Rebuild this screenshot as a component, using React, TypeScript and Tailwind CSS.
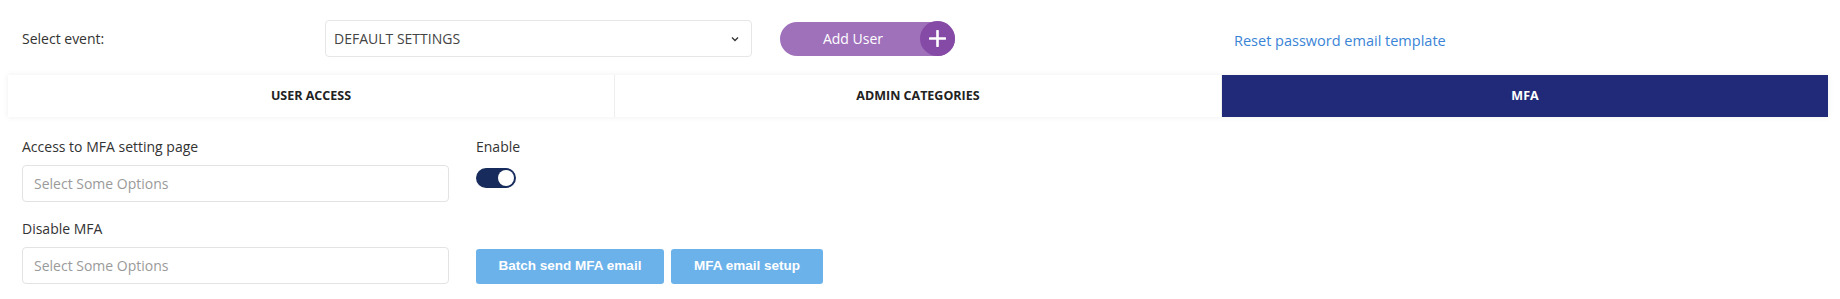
import { useState } from 'react';

const tabs = ['User access', 'Admin categories', 'MFA'];

function ChevronDown() {
  return (
    <svg width="8" height="6" viewBox="0 0 8 6" fill="none" aria-hidden="true">
      <path d="M1 1.5 4 4.5 7 1.5" stroke="#333" strokeWidth="1.3" />
    </svg>
  );
}

function PlusIcon() {
  return (
    <svg width="17" height="17" viewBox="0 0 17 17" aria-hidden="true">
      <path d="M8.5 1v15M1 8.5h15" stroke="#fff" strokeWidth="2.6" strokeLinecap="round" />
    </svg>
  );
}

function OptionsField({ label }: { label: string }) {
  return (
    <div className="flex flex-col">
      <label className="mb-2 text-[14px] leading-5 text-[#333]">{label}</label>
      <div className="flex h-[37px] w-[427px] items-center rounded-[4px] border border-[#e3e3e3] px-[11px] text-[14px] text-[#9a9a9a]">
        Select Some Options
      </div>
    </div>
  );
}

export default function App() {
  const [active, setActive] = useState(2);
  const [enabled, setEnabled] = useState(true);

  return (
    <div className="min-h-[299px] w-[1840px] bg-white font-['Open_Sans',sans-serif]">
      {/* header */}
      <div className="flex items-center px-[22px] pt-[20px]">
        <span className="w-[303px] text-[14px] text-[#333]">Select event:</span>
        <button className="flex h-[37px] w-[427px] items-center justify-between rounded-[4px] border border-[#e6e6e6] pr-[12px] pl-[8px] text-[14px] text-[#444]">
          DEFAULT SETTINGS
          <ChevronDown />
        </button>
        <button className="ml-[28px] flex h-[34px] w-[175px] items-center rounded-full bg-[#a071bb] text-[14px] text-white">
          <span className="flex-1 pl-[6px] text-center">Add User</span>
          <span className="flex h-[35px] w-[35px] items-center justify-center rounded-full bg-[#8549a6]">
            <PlusIcon />
          </span>
        </button>
        <a href="#" className="mt-[4px] ml-[279px] text-[14.5px] text-[#3a84d6]">
          Reset password email template
        </a>
      </div>

      {/* tabs */}
      <div className="mt-[18px] ml-[8px] flex h-[42px] w-[1820px] bg-white shadow-[0_0_6px_rgba(0,0,0,0.07)]">
        {tabs.map((t, i) => (
          <button
            key={t}
            onClick={() => setActive(i)}
            className={
              i === active
                ? 'flex flex-1 items-center justify-center bg-[#212a78] text-[12.5px] font-bold text-white uppercase'
                : 'flex flex-1 items-center justify-center border-r border-[#eeeeee] text-[12.5px] font-bold text-[#222] uppercase'
            }
          >
            {t}
          </button>
        ))}
      </div>

      {/* MFA panel */}
      <div className="grid grid-cols-[427px_auto] gap-x-[27px] px-[22px] pt-[20px]">
        <OptionsField label="Access to MFA setting page" />
        <div className="flex flex-col">
          <span className="text-[14px] leading-5 text-[#333]">Enable</span>
          <button
            onClick={() => setEnabled(!enabled)}
            className={
              enabled
                ? 'mt-[11px] flex h-[20px] w-[40px] items-center justify-end rounded-full bg-[#172c5c] px-[2px]'
                : 'mt-[11px] flex h-[20px] w-[40px] items-center justify-start rounded-full bg-[#c8c8c8] px-[2px]'
            }
          >
            <span className="h-[16px] w-[16px] rounded-full bg-white" />
          </button>
        </div>

        <div className="mt-[17px]">
          <OptionsField label="Disable MFA" />
        </div>
        <div className="flex items-end gap-[7px]">
          <button className="h-[35px] w-[188px] rounded-[3px] bg-[#6cb2ea] font-['Liberation_Sans',Arial,sans-serif] text-[13.5px] font-bold text-white">
            Batch send MFA email
          </button>
          <button className="h-[35px] w-[152px] rounded-[3px] bg-[#6cb2ea] font-['Liberation_Sans',Arial,sans-serif] text-[13.5px] font-bold text-white">
            MFA email setup
          </button>
        </div>
      </div>
    </div>
  );
}
